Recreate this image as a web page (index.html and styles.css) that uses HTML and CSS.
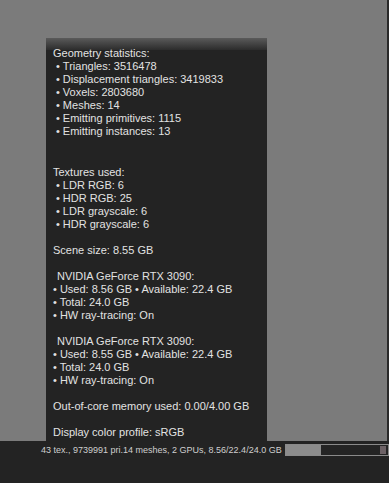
FILE: index.html
```html
<!DOCTYPE html>
<html lang="en">
<head>
    <meta charset="UTF-8">
    <title>Render statistics</title>
    <link rel="stylesheet" href="styles.css">
</head>
<body>
    <!-- Area do viewport com o tooltip -->
    <div class="viewport">
        <div class="stats-tooltip">
            <div class="tooltip-header"></div>
            <div class="tooltip-body">
                <p>Geometry statistics:</p>
                <ul>
                    <li>Triangles: 3516478</li>
                    <li>Displacement triangles: 3419833</li>
                    <li>Voxels: 2803680</li>
                    <li>Meshes: 14</li>
                    <li>Emitting primitives: 1115</li>
                    <li>Emitting instances: 13</li>
                </ul>

                <p class="gap-big">Textures used:</p>
                <ul>
                    <li>LDR RGB: 6</li>
                    <li>HDR RGB: 25</li>
                    <li>LDR grayscale: 6</li>
                    <li>HDR grayscale: 6</li>
                </ul>

                <p class="gap">Scene size: 8.55 GB</p>

                <p class="gap gpu">NVIDIA GeForce RTX 3090:</p>
                <p class="gpu-line">&bull; Used: 8.56 GB &bull; Available: 22.4 GB</p>
                <p class="gpu-line">&bull; Total: 24.0 GB</p>
                <p class="gpu-line">&bull; HW ray-tracing: On</p>

                <p class="gap gpu">NVIDIA GeForce RTX 3090:</p>
                <p class="gpu-line">&bull; Used: 8.55 GB &bull; Available: 22.4 GB</p>
                <p class="gpu-line">&bull; Total: 24.0 GB</p>
                <p class="gpu-line">&bull; HW ray-tracing: On</p>

                <p class="gap">Out-of-core memory used: 0.00/4.00 GB</p>

                <p class="gap">Display color profile: sRGB</p>
            </div>
        </div>
    </div>

    <!-- Barra de status -->
    <div class="status-bar">
        <span class="status-text">43 tex., 9739991 pri.14 meshes, 2 GPUs, 8.56/22.4/24.0 GB</span>
        <div class="memory-bar">
            <div class="memory-fill" style="width: 35%"></div>
            <div class="memory-mark"></div>
        </div>
    </div>
</body>
</html>
```

FILE: styles.css
```css
* {
  margin: 0;
  padding: 0;
  box-sizing: border-box;
}

body {
  font-family: "Liberation Sans", Arial, sans-serif;
  background-color: #232323;
  color: #e2e2e2;
  width: 389px;
  height: 483px;
  overflow: hidden;
  display: flex;
  flex-direction: column;
}

.viewport {
  height: 441px;
  background-color: #7b7b7b;
  border-right: 2px solid #2a2a2a;
  padding: 38px 0 0 46px;
}

.stats-tooltip {
  width: 221px;
  height: 403px;
  background-color: #232323;
  overflow: hidden;
}

.tooltip-header {
  height: 12px;
  background: linear-gradient(#5a5a5a, #2c2c2c);
}

.tooltip-body {
  margin-top: -3px;
  padding: 0 0 0 7px;
  font-size: 11px;
  line-height: 13px;
}

.tooltip-body ul {
  list-style: none;
}

.tooltip-body li {
  padding-left: 3px;
}

.tooltip-body li::before {
  content: "\2022";
  margin-right: 3px;
}

.gap {
  margin-top: 13px;
}

.gap-big {
  margin-top: 28px;
}

.gpu {
  padding-left: 4px;
}

.status-bar {
  flex: 1;
  display: flex;
  align-items: flex-start;
  padding: 3px 0 0 41px;
  font-size: 9px;
  color: #cfcfcf;
}

.status-text {
  white-space: nowrap;
  line-height: 13px;
}

.memory-bar {
  position: relative;
  flex-shrink: 0;
  width: 104px;
  height: 12px;
  margin-left: 3px;
  border: 1px solid #8a8a8a;
  background-color: #242424;
}

.memory-fill {
  height: 100%;
  background-color: #8c8c8c;
}

.memory-mark {
  position: absolute;
  right: 2px;
  top: 1px;
  width: 6px;
  height: 8px;
  background-color: #6d6266;
}
```
